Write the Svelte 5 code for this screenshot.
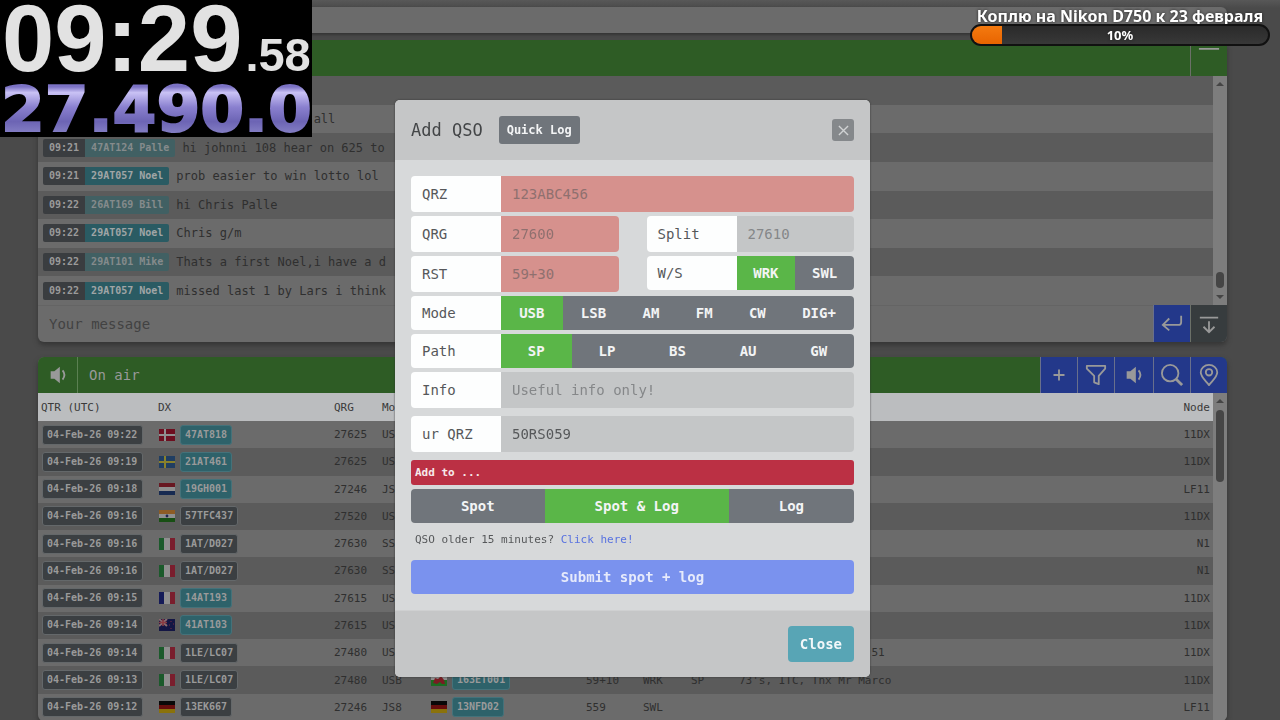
<script lang="ts">
  type Message = { time: string; call: string; text: string; bright?: boolean };
  type Spot = {
    date: string;
    flag: string;
    dx: string;
    plain?: boolean;
    qrg: string;
    mode: string;
    deFlag?: string;
    de?: string;
    rst?: string;
    ws?: string;
    path?: string;
    info?: string;
    node: string;
  };

  const messages: Message[] = [
    { time: '09:21', call: '26AT169 Bill', text: 'morning friends to all' },
    { time: '09:21', call: '47AT124 Palle', text: 'hi johnni 108 hear on 625 to' },
    { time: '09:21', call: '29AT057 Noel', text: 'prob easier to win lotto lol', bright: true },
    { time: '09:22', call: '26AT169 Bill', text: 'hi Chris Palle' },
    { time: '09:22', call: '29AT057 Noel', text: 'Chris g/m', bright: true },
    { time: '09:22', call: '29AT101 Mike', text: 'Thats a first Noel,i have a d' },
    { time: '09:22', call: '29AT057 Noel', text: 'missed last 1 by Lars i think', bright: true },
  ];

  const spots: Spot[] = [
    { date: '04-Feb-26 09:22', flag: 'dk', dx: '47AT818', qrg: '27625', mode: 'USB', node: '11DX' },
    { date: '04-Feb-26 09:19', flag: 'se', dx: '21AT461', qrg: '27625', mode: 'USB', node: '11DX' },
    { date: '04-Feb-26 09:18', flag: 'nl', dx: '19GH001', qrg: '27246', mode: 'JS8', node: 'LF11' },
    { date: '04-Feb-26 09:16', flag: 'in', dx: '57TFC437', plain: true, qrg: '27520', mode: 'USB', node: '11DX' },
    { date: '04-Feb-26 09:16', flag: 'it', dx: '1AT/D027', plain: true, qrg: '27630', mode: 'SSB', node: 'N1' },
    { date: '04-Feb-26 09:16', flag: 'it', dx: '1AT/D027', plain: true, qrg: '27630', mode: 'SSB', node: 'N1' },
    { date: '04-Feb-26 09:15', flag: 'fr', dx: '14AT193', qrg: '27615', mode: 'USB', node: '11DX' },
    { date: '04-Feb-26 09:14', flag: 'nz', dx: '41AT103', qrg: '27615', mode: 'USB', node: '11DX' },
    { date: '04-Feb-26 09:14', flag: 'it', dx: '1LE/LC07', plain: true, qrg: '27480', mode: 'USB', info: 'tnx for qso Roberto 51', node: '11DX' },
    { date: '04-Feb-26 09:13', flag: 'it', dx: '1LE/LC07', plain: true, qrg: '27480', mode: 'USB', deFlag: 'wal', de: '163ET001', rst: '59+10', ws: 'WRK', path: 'SP', info: "73's, ITC, Tnx Mr Marco", node: '11DX' },
    { date: '04-Feb-26 09:12', flag: 'de', dx: '13EK667', plain: true, qrg: '27246', mode: 'JS8', deFlag: 'de', de: '13NFD02', rst: '559', ws: 'SWL', node: 'LF11' },
  ];

  const modes = ['USB', 'LSB', 'AM', 'FM', 'CW', 'DIG+'];
  const paths = ['SP', 'LP', 'BS', 'AU', 'GW'];
  const targets = ['Spot', 'Spot & Log', 'Log'];

  let ws = $state('WRK');
  let mode = $state('USB');
  let path = $state('SP');
  let target = $state('Spot & Log');
  let own = $state('50RS059');
  let open = $state(true);
  let goal = $state(10);

  const submitLabel = $derived('Submit ' + target.toLowerCase().replace('&', '+'));
</script>

{#snippet flagIcon(code: string)}
  <svg class="flag" viewBox="0 0 16 12" aria-hidden="true">
    {#if code === 'dk'}
      <rect width="16" height="12" fill="#6d0f20" />
      <path d="M6 0v12M0 6h16" stroke="#8f8f8f" stroke-width="2" />
    {:else if code === 'se'}
      <rect width="16" height="12" fill="#203e62" />
      <path d="M6 0v12M0 6h16" stroke="#88802c" stroke-width="2" />
    {:else if code === 'nl'}
      <rect width="16" height="12" fill="#8f8f8f" />
      <rect width="16" height="4" fill="#681721" />
      <rect y="8" width="16" height="4" fill="#172a51" />
    {:else if code === 'in'}
      <rect width="16" height="12" fill="#8f8f8f" />
      <rect width="16" height="4" fill="#8d5c25" />
      <rect y="8" width="16" height="4" fill="#184f14" />
      <circle cx="8" cy="6" r="1.4" fill="#22254f" />
    {:else if code === 'it' || code === 'fr'}
      <rect width="16" height="12" fill="#8f8f8f" />
      <rect width="5" height="12" fill={code === 'it' ? '#1b5a2b' : '#151b58'} />
      <rect x="11" width="5" height="12" fill="#7a1e2d" />
    {:else if code === 'nz'}
      <rect width="16" height="12" fill="#141644" />
      <path d="M0 0l8 7M8 0L0 7" stroke="#8a6a6e" stroke-width="2" />
      <path d="M4 0v7M0 3.500h8" stroke="#8b3b42" stroke-width="1.600" />
      <path d="M12 2v1M12 9v1M10 6h1M14 5h1" stroke="#7a2b40" />
    {:else if code === 'de'}
      <rect width="16" height="4" fill="#080808" />
      <rect y="4" width="16" height="4" fill="#650d0c" />
      <rect y="8" width="16" height="4" fill="#8a720b" />
    {:else}
      <rect width="16" height="6" fill="#8f8f8f" />
      <rect y="6" width="16" height="6" fill="#1d6b22" />
      <path d="M2 9l2-5 3 1 3-3 3 4 1 4h-3l-2-2-3 2z" fill="#7a1c22" />
    {/if}
  </svg>
{/snippet}

{#snippet speaker()}
  <svg class="icon" viewBox="0 0 24 24" aria-hidden="true">
    <path d="M4 8h4l6-5v18l-6-5H4z" fill="currentColor" />
    <path d="M17 7q4 5 0 10" fill="none" stroke="currentColor" stroke-width="2" />
  </svg>
{/snippet}

{#snippet segments(options: string[], value: string, label: string, pick: (v: string) => void)}
  <div class="segments" role="group" aria-label={label}>
    {#each options as option (option)}
      <button type="button" class:active={option === value} aria-pressed={option === value} onclick={() => pick(option)}>{option}</button>
    {/each}
  </div>
{/snippet}

<div class="page">
  <nav class="navbar" aria-label="Main"></nav>

  <section class="card chat">
    <header class="bar">
      <span class="grow"></span>
      <button class="bar-btn" aria-label="Collapse">
        <svg class="icon" viewBox="0 0 24 24" aria-hidden="true">
          <path d="M1 2h22" stroke="currentColor" stroke-width="2" />
        </svg>
      </button>
    </header>
    <div class="scroller">
      <ul class="messages">
        <li></li>
        {#each messages as m}
          <li>
            <span class="stamp">{m.time}</span><span class="who" class:bright={m.bright}>{m.call}</span>
            <span>{m.text}</span>
          </li>
        {/each}
      </ul>
      <div class="track">
        <i class="up"></i>
        <span class="grow"></span>
        <i class="thumb"></i>
        <i class="down"></i>
      </div>
    </div>
    <form class="compose" onsubmit={(e) => e.preventDefault()}>
      <input aria-label="Your message" placeholder="Your message" />
      <button class="send" aria-label="Send">
        <svg class="icon" viewBox="0 0 24 24" aria-hidden="true">
          <path d="M22 3v7q0 3-3 3H3M9 6l-7 7 7 6" fill="none" stroke="currentColor" stroke-width="2" />
        </svg>
      </button>
      <button type="button" class="latest" aria-label="Scroll to latest">
        <svg class="icon" viewBox="0 0 24 24" aria-hidden="true">
          <path d="M2 5h20M12 9v12M6 15l6 6 6-6" fill="none" stroke="currentColor" stroke-width="2" />
        </svg>
      </button>
    </form>
  </section>

  <section class="card air">
    <header class="bar">
      <button class="sound" aria-label="Sound">{@render speaker()}</button>
      <h2 class="grow">On air</h2>
      <button class="tool" aria-label="Add">
        <svg class="icon" viewBox="0 0 24 24" aria-hidden="true">
          <path d="M12 6v12M6 12h12" stroke="currentColor" stroke-width="2" />
        </svg>
      </button>
      <button class="tool" aria-label="Filter">
        <svg class="icon" viewBox="0 0 24 24" aria-hidden="true">
          <path d="M2 2h20v3l-7 8v9l-5-2v-7L2 5z" fill="none" stroke="currentColor" stroke-width="2" stroke-linejoin="round" />
        </svg>
      </button>
      <button class="tool alerts" aria-label="Alerts">{@render speaker()}</button>
      <button class="tool" aria-label="Search">
        <svg class="icon" viewBox="0 0 24 24" aria-hidden="true">
          <circle cx="10" cy="10" r="9" fill="none" stroke="currentColor" stroke-width="2" />
          <path d="M16 16l7 7" stroke="currentColor" stroke-width="3" />
        </svg>
      </button>
      <button class="tool" aria-label="Map">
        <svg class="icon" viewBox="0 0 24 24" aria-hidden="true">
          <path d="M12 23C8 18 3 14 3 9a9 8 0 0 1 18 0c0 5-5 9-9 14z" fill="none" stroke="currentColor" stroke-width="2" />
          <circle cx="12" cy="9" r="3.500" fill="none" stroke="currentColor" stroke-width="2" />
        </svg>
      </button>
    </header>
    <div class="scroller">
      <table>
        <colgroup>
          <col class="c-date" /><col class="c-dx" /><col class="c-num" /><col class="c-num" /><col class="c-de" />
          <col class="c-rst" /><col class="c-num" /><col class="c-num" /><col /><col class="c-node" />
        </colgroup>
        <thead>
          <tr>
            <th>QTR (UTC)</th><th>DX</th><th>QRG</th><th>Mode</th><th>DE</th>
            <th>RST</th><th>W/S</th><th>Path</th><th>Info</th><th class="node">Node</th>
          </tr>
        </thead>
        <tbody>
          {#each spots as s}
            <tr>
              <td><span class="badge date">{s.date}</span></td>
              <td>{@render flagIcon(s.flag)}<span class="badge" class:teal={!s.plain}>{s.dx}</span></td>
              <td>{s.qrg}</td>
              <td>{s.mode}</td>
              <td>
                {#if s.de && s.deFlag}
                  {@render flagIcon(s.deFlag)}<span class="badge teal">{s.de}</span>
                {/if}
              </td>
              <td>{s.rst ?? ''}</td>
              <td>{s.ws ?? ''}</td>
              <td>{s.path ?? ''}</td>
              <td>{s.info ?? ''}</td>
              <td class="node">{s.node}</td>
            </tr>
          {/each}
        </tbody>
      </table>
      <div class="track">
        <i class="up"></i>
        <i class="thumb long"></i>
      </div>
    </div>
  </section>
</div>

{#if open}
  <div class="overlay">
    <form class="modal" onsubmit={(e) => e.preventDefault()}>
      <header class="modal-head">
        <h1>Add QSO</h1>
        <button type="button" class="quick">Quick Log</button>
        <span class="grow"></span>
        <button type="button" class="dismiss" aria-label="Dismiss" onclick={() => (open = false)}>
          <svg viewBox="0 0 12 12" aria-hidden="true"><path d="M1 1l10 10M11 1L1 11" stroke="currentColor" stroke-width="1.500" /></svg>
        </button>
      </header>

      <div class="modal-body">
        <div class="field">
          <label for="qrz">QRZ</label>
          <input id="qrz" class="required" placeholder="123ABC456" />
        </div>
        <div class="pair">
          <div class="field">
            <label for="qrg">QRG</label>
            <input id="qrg" class="required" placeholder="27600" />
          </div>
          <div class="field">
            <label for="split">Split</label>
            <input id="split" placeholder="27610" />
          </div>
        </div>
        <div class="pair">
          <div class="field">
            <label for="rst">RST</label>
            <input id="rst" class="required" placeholder="59+30" />
          </div>
          <div class="field short">
            <span class="label">W/S</span>
            {@render segments(['WRK', 'SWL'], ws, 'W/S', (v) => (ws = v))}
          </div>
        </div>
        <div class="field short">
          <span class="label">Mode</span>
          {@render segments(modes, mode, 'Mode', (v) => (mode = v))}
        </div>
        <div class="field short">
          <span class="label">Path</span>
          {@render segments(paths, path, 'Path', (v) => (path = v))}
        </div>
        <div class="field spaced">
          <label for="info">Info</label>
          <input id="info" placeholder="Useful info only!" />
        </div>
        <div class="field spaced">
          <label for="own">ur QRZ</label>
          <input id="own" bind:value={own} />
        </div>
        <div class="notice">Add to ...</div>
        <div class="field short">
          {@render segments(targets, target, 'Add to', (v) => (target = v))}
        </div>
        <p class="older">QSO older 15 minutes? <a href="#older">Click here!</a></p>
        <button class="submit">{submitLabel}</button>
      </div>

      <footer class="modal-foot">
        <button type="button" class="close" onclick={() => (open = false)}>Close</button>
      </footer>
    </form>
  </div>
{/if}

<aside class="clock">
  <div class="time">09:29<small>.58</small></div>
  <div class="freq"><span>27.490.0</span></div>
</aside>

<aside class="goal">
  <div class="goal-title">Коплю на Nikon D750 к 23 февраля</div>
  <div class="goal-bar">
    <div class="goal-fill" style="width: {goal}%"></div>
    <span class="goal-value">{goal}%</span>
  </div>
</aside>

<style>
  :global(body) {
    background: #4a4a4a;
    font-family: 'DejaVu Sans Mono', 'Liberation Mono', monospace;
    font-size: 14px;
    color: #2f2f2f;
  }

  :global(*) {
    box-sizing: border-box;
  }

  button,
  input {
    font: inherit;
    color: inherit;
    border: 0;
    border-radius: 0;
    margin: 0;
    padding: 0;
    background: none;
    min-width: 0;
  }

  button {
    cursor: pointer;
  }

  h1,
  h2,
  p,
  ul {
    margin: 0;
    padding: 0;
    font-weight: 400;
  }

  .grow {
    flex: 1;
  }

  .page {
    height: 100vh;
    overflow: hidden;
    padding: 7px 53px 0 38px;
    background: linear-gradient(#585858, #4a4a4a 8px);
  }

  .navbar {
    height: 26px;
    margin-bottom: 7px;
    background: #6b6b6b;
    border-radius: 0 6px 0 0;
    box-shadow: 0 2px 3px #333;
  }

  .card {
    border-radius: 6px;
    overflow: hidden;
    background: #6b6b6b;
    box-shadow: 0 3px 5px #353535;
  }

  .chat {
    margin-bottom: 15px;
  }

  .bar {
    display: flex;
    height: 36px;
    background: #2e5c25;
    color: #999;
  }

  .bar button,
  .compose button {
    width: 37px;
    display: flex;
    align-items: center;
    justify-content: center;
    border-left: 1px solid #6b7068;
  }

  .bar .sound {
    width: 40px;
    border-left: 0;
    border-right: 1px solid #5b8052;
  }

  .bar h2 {
    padding-left: 11px;
    font-size: 14px;
    line-height: 36px;
  }

  .bar .tool,
  .compose .send {
    background: #23388a;
    border-left-color: #69708c;
  }

  .bar .alerts {
    width: 39px;
  }

  .compose .latest {
    background: #373c3e;
  }

  .icon {
    width: 22px;
    height: 22px;
  }

  .scroller {
    display: flex;
  }

  .messages {
    flex: 1;
    min-width: 0;
    height: 229px;
    display: flex;
    flex-direction: column;
    list-style: none;
    font-size: 12px;
  }

  .messages li {
    flex: 1;
    display: flex;
    align-items: center;
    padding-left: 5px;
    white-space: pre;
  }

  .messages li:nth-child(odd) {
    background: #5b5b5b;
  }

  .stamp,
  .who {
    height: 18px;
    padding: 0 6px;
    font-size: 10px;
    font-weight: 700;
    line-height: 18px;
    color: #9a9a9a;
    background: #3a3d40;
    border-radius: 2px 0 0 2px;
  }

  .who {
    margin-right: 7px;
    color: #858b8c;
    background: #416063;
    border-radius: 0 2px 2px 0;
  }

  .who.bright {
    color: #a0a5a6;
    background: #2a5b63;
  }

  .track {
    width: 14px;
    display: flex;
    flex-direction: column;
    align-items: center;
    gap: 7px;
    padding: 6px 0;
    background: #7d7d7d;
  }

  .up,
  .down {
    border: 4px solid transparent;
    border-top: 0;
    border-bottom: 4px solid #454545;
  }

  .down {
    border-bottom: 0;
    border-top: 4px solid #454545;
  }

  .thumb {
    width: 8px;
    height: 16px;
    border-radius: 4px;
    background: #454545;
  }

  .thumb.long {
    height: 72px;
  }

  .compose {
    display: flex;
    height: 37px;
    color: #999;
  }

  .compose input {
    flex: 1;
    padding: 0 11px;
    border-top: 1px solid #646464;
    outline: 0;
  }

  .compose input::placeholder {
    color: #424242;
    opacity: 1;
  }

  table {
    flex: 1;
    width: 0;
    height: 328px;
    table-layout: fixed;
    border-collapse: collapse;
    font-size: 11px;
    white-space: nowrap;
  }

  .c-date {
    width: 117px;
  }

  .c-dx {
    width: 176px;
  }

  .c-num {
    width: 48px;
  }

  .c-de {
    width: 156px;
  }

  .c-rst {
    width: 57px;
  }

  .c-node {
    width: 60px;
  }

  th,
  td {
    padding: 0 3px;
    text-align: left;
    vertical-align: middle;
  }

  th {
    height: 28px;
    background: #bbbdbf;
    color: #3a3a3a;
    font-weight: 400;
  }

  tbody tr:nth-child(even) {
    background: #5b5b5b;
  }

  .node {
    text-align: right;
  }

  .flag {
    width: 16px;
    height: 12px;
    margin: 0 5px 0 1px;
    vertical-align: middle;
  }

  .badge {
    display: inline-block;
    height: 20px;
    padding: 0 4px;
    border: 1px solid #64686a;
    border-radius: 3px;
    background: #3b3f42;
    color: #9a9a9a;
    font-size: 10px;
    font-weight: 700;
    line-height: 18px;
    vertical-align: middle;
  }

  .badge.date {
    margin-left: 1px;
    padding: 0 5px 0 4px;
  }

  .badge.teal {
    background: #2e626a;
    border-color: #44727a;
  }

  .overlay {
    position: fixed;
    inset: 0;
    display: flex;
    align-items: flex-start;
    justify-content: center;
    padding: 100px 15px 0 0;
  }

  .modal {
    width: 475px;
    max-width: 100%;
    overflow: hidden;
    border-radius: 5px;
    background: #d7d9da;
    box-shadow: 0 0 2px #303030;
    color: #56585a;
  }

  .modal-head,
  .modal-foot {
    display: flex;
    align-items: center;
    padding: 15px 16px;
    background: #c5c6c7;
  }

  .modal-head {
    height: 60px;
  }

  .modal h1 {
    font-size: 17px;
    color: #434547;
  }

  .quick {
    height: 28px;
    margin-left: 16px;
    padding: 0 8px;
    border-radius: 3px;
    background: #70757b;
    color: #f3f4f5;
    font-size: 12px;
    font-weight: 700;
  }

  .dismiss {
    width: 22px;
    height: 22px;
    display: flex;
    align-items: center;
    justify-content: center;
    border-radius: 3px;
    background: #85888b;
    color: #d0d2d3;
  }

  .dismiss svg {
    width: 11px;
    height: 11px;
  }

  .modal-body {
    display: flex;
    flex-direction: column;
    gap: 4px;
    padding: 16px;
  }

  .pair {
    display: grid;
    grid-template-columns: 1fr 1fr;
    align-items: start;
    gap: 28px;
  }

  .field {
    display: flex;
    min-width: 0;
    height: 36px;
    overflow: hidden;
    border-radius: 4px;
  }

  .field.short {
    height: 34px;
  }

  .field.spaced {
    margin-bottom: 4px;
  }

  .field label,
  .field .label {
    flex: none;
    width: 90px;
    display: flex;
    align-items: center;
    padding-left: 11px;
    background: #fdfefe;
  }

  .field input {
    flex: 1;
    padding: 0 11px;
    background: #c4c6c7;
    outline: 0;
  }

  .field input::placeholder {
    color: #858789;
    opacity: 1;
  }

  .field input.required {
    background: #d6918d;
  }

  .field input.required::placeholder {
    color: #8f706f;
  }

  .segments {
    flex: 1;
    display: flex;
    background: #70757b;
  }

  .segments button {
    flex: 1 1 auto;
    color: #f3f4f5;
    font-weight: 700;
  }

  .segments .active {
    background: #5ab648;
  }

  .notice {
    height: 25px;
    padding-left: 4px;
    border-radius: 3px;
    background: #bb3044;
    color: #f6e9eb;
    font-size: 11px;
    font-weight: 700;
    line-height: 25px;
  }

  .older {
    padding: 0 4px;
    font-size: 11px;
    line-height: 26px;
  }

  .older a {
    color: #5872e0;
    text-decoration: none;
  }

  .submit {
    height: 34px;
    margin-top: 3px;
    border-radius: 4px;
    background: #7a92ee;
    color: #e6eafb;
    font-weight: 700;
  }

  .modal-foot {
    justify-content: flex-end;
    border-top: 1px solid #cfd0d1;
  }

  .close {
    height: 36px;
    padding: 0 12px;
    border-radius: 4px;
    background: #58a5b5;
    color: #f1f7f9;
    font-weight: 700;
  }

  .clock {
    position: absolute;
    top: 0;
    left: 0;
    width: 312px;
    background: #000;
    white-space: nowrap;
  }

  .time {
    height: 81px;
    padding-left: 2px;
    color: #e2e2e2;
    font: 700 94px/78px 'Liberation Sans', sans-serif;
  }

  .time small {
    margin-left: 3px;
    font-size: 47px;
    line-height: 0;
  }

  .freq {
    height: 56px;
    padding-left: 1px;
    font: 700 63px/58px 'DejaVu Sans', sans-serif;
  }

  .freq span {
    display: block;
    color: transparent;
    background: linear-gradient(#7b72c4 10%, #c9c2f5 20%, #8a80cf 45%, #6c64b4 70%, #8a85c8 95%);
    background-clip: text;
    -webkit-text-stroke: 2px transparent;
  }

  .goal {
    position: absolute;
    top: 8px;
    right: 10px;
    width: 300px;
    color: #fff;
    text-align: center;
    white-space: nowrap;
    font-family: 'Noto Sans', 'Open Sans', sans-serif;
    font-weight: 700;
    text-shadow: 0 0 3px #222;
  }

  .goal-title {
    font-size: 16px;
    line-height: 16px;
  }

  .goal-bar {
    position: relative;
    height: 22px;
    overflow: hidden;
    border: 2px solid #111;
    border-radius: 11px;
    background: linear-gradient(#2a2a2a, #383838);
  }

  .goal-fill {
    height: 100%;
    background: linear-gradient(#f47a10, #e86400);
  }

  .goal-value {
    position: absolute;
    inset: 0;
    font-size: 13px;
    line-height: 18px;
  }
</style>
